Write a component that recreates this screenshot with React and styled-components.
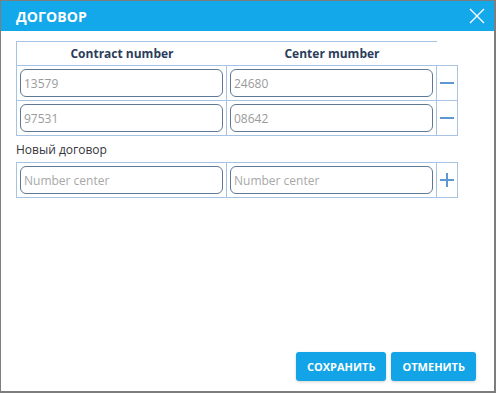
import React, { useState } from "react";
import styled, { createGlobalStyle } from "styled-components";

const GlobalStyle = createGlobalStyle`
  html, body {
    margin: 0;
    padding: 0;
    background: #ffffff;
  }
  * {
    box-sizing: border-box;
  }
`;

const Dialog = styled.div`
  width: 496px;
  height: 393px;
  display: flex;
  flex-direction: column;
  background: #ffffff;
  border: 1px solid #7d7d7d;
  border-right-width: 2px;
  border-bottom-width: 2px;
  font-family: "Open Sans", "Noto Sans", sans-serif;
`;

const TitleBar = styled.div`
  height: 30px;
  flex-shrink: 0;
  display: flex;
  align-items: center;
  justify-content: space-between;
  padding: 0 8px 0 15px;
  background: #13a8e9;
  color: #ffffff;
`;

const Title = styled.div`
  font-size: 14px;
  font-weight: 700;
  letter-spacing: 0.1px;
`;

const CloseButton = styled.button`
  width: 18px;
  height: 18px;
  padding: 0;
  border: none;
  background: transparent;
  display: flex;
  align-items: center;
  justify-content: center;
  cursor: pointer;
`;

const Body = styled.div`
  flex: 1;
  display: flex;
  flex-direction: column;
  padding: 10px 15px 0;
`;

const HeaderRow = styled.div`
  display: grid;
  grid-template-columns: 210px 210px;
  width: 421px;
  height: 24px;
  border-top: 1px solid #a7c3e3;
  border-left: 1px solid #a7c3e3;
`;

const HeaderCell = styled.div`
  display: flex;
  align-items: center;
  justify-content: center;
  font-size: 12px;
  font-weight: 700;
  color: #2b3d5b;
`;

const Grid = styled.div`
  display: grid;
  grid-template-columns: 210px 210px 21px;
  width: 442px;
  border-left: 1px solid #a7c3e3;
  border-top: 1px solid #a7c3e3;
`;

const Cell = styled.div`
  height: 35px;
  padding: 3px;
  border-right: 1px solid #a7c3e3;
  border-bottom: 1px solid #a7c3e3;
  display: flex;
  align-items: center;
  justify-content: center;
`;

const Field = styled.input`
  width: 100%;
  height: 28px;
  border: 1px solid #5f7894;
  border-radius: 6px;
  padding: 0 3px;
  font-family: "Open Sans", "Noto Sans", sans-serif;
  font-size: 12px;
  color: #9a9a9a;
  background: #ffffff;
  outline: none;

  &::placeholder {
    color: #a8a8a8;
  }
`;

const IconButton = styled.button`
  width: 16px;
  height: 16px;
  padding: 0;
  border: none;
  background: transparent;
  display: flex;
  align-items: center;
  justify-content: center;
  cursor: pointer;
`;

const Label = styled.div`
  padding: 5px 0 4px;
  line-height: 17px;
  font-size: 12px;
  color: #33363b;
`;

const Footer = styled.div`
  margin-top: auto;
  display: flex;
  justify-content: flex-end;
  gap: 5px;
  padding: 0 18px 10px 0;
`;

const ActionButton = styled.button`
  height: 29px;
  padding: 0 ${(p) => p.$pad}px;
  border: none;
  border-radius: 3px;
  background: #12a4e7;
  color: #ffffff;
  font-family: "Open Sans", "Noto Sans", sans-serif;
  font-size: 11px;
  font-weight: 700;
  box-shadow: 0 1px 3px rgba(0, 0, 0, 0.18);
  cursor: pointer;
`;

const CloseIcon = () => (
  <svg width="16" height="16" viewBox="0 0 16 16">
    <path d="M1 1 L15 15 M15 1 L1 15" stroke="#ffffff" strokeWidth="1.4" fill="none" />
  </svg>
);

const MinusIcon = () => (
  <svg width="16" height="16" viewBox="0 0 16 16">
    <rect x="1" y="7" width="14" height="2" fill="#5f97d2" />
  </svg>
);

const PlusIcon = () => (
  <svg width="16" height="16" viewBox="0 0 16 16">
    <rect x="1" y="7" width="14" height="2" fill="#5f97d2" />
    <rect x="7" y="1" width="2" height="14" fill="#5f97d2" />
  </svg>
);

const initialRows = [
  { contract: "13579", center: "24680" },
  { contract: "97531", center: "08642" },
];

export default function App() {
  const [rows, setRows] = useState(initialRows);
  const [draft, setDraft] = useState({ contract: "", center: "" });

  const update = (i, key, value) =>
    setRows(rows.map((r, j) => (j === i ? { ...r, [key]: value } : r)));

  return (
    <>
      <GlobalStyle />
      <Dialog>
        <TitleBar>
          <Title>ДОГОВОР</Title>
          <CloseButton>
            <CloseIcon />
          </CloseButton>
        </TitleBar>
        <Body>
          <HeaderRow>
            <HeaderCell>Contract number</HeaderCell>
            <HeaderCell>Center mumber</HeaderCell>
          </HeaderRow>
          <Grid>
            {rows.map((row, i) => (
              <React.Fragment key={i}>
                <Cell>
                  <Field value={row.contract} onChange={(e) => update(i, "contract", e.target.value)} />
                </Cell>
                <Cell>
                  <Field value={row.center} onChange={(e) => update(i, "center", e.target.value)} />
                </Cell>
                <Cell>
                  <IconButton onClick={() => setRows(rows.filter((_, j) => j !== i))}>
                    <MinusIcon />
                  </IconButton>
                </Cell>
              </React.Fragment>
            ))}
          </Grid>
          <Label>Новый договор</Label>
          <Grid>
            <Cell>
              <Field
                placeholder="Number center"
                value={draft.contract}
                onChange={(e) => setDraft({ ...draft, contract: e.target.value })}
              />
            </Cell>
            <Cell>
              <Field
                placeholder="Number center"
                value={draft.center}
                onChange={(e) => setDraft({ ...draft, center: e.target.value })}
              />
            </Cell>
            <Cell>
              <IconButton
                onClick={() => {
                  setRows([...rows, draft]);
                  setDraft({ contract: "", center: "" });
                }}
              >
                <PlusIcon />
              </IconButton>
            </Cell>
          </Grid>
        </Body>
        <Footer>
          <ActionButton $pad={11}>СОХРАНИТЬ</ActionButton>
          <ActionButton $pad={11}>ОТМЕНИТЬ</ActionButton>
        </Footer>
      </Dialog>
    </>
  );
}
